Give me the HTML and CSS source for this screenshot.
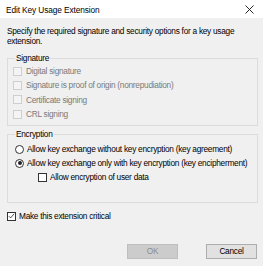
FILE: index.html
```html
<!DOCTYPE html>
<html>
<head>
<meta charset="utf-8">
<link rel="stylesheet" href="styles.css">
</head>
<body>
<div class="dialog">
  <div class="titlebar">
    <span class="title">Edit Key Usage Extension</span>
    <svg class="close" width="9" height="9" viewBox="0 0 9 9"><path d="M0.5 0.5 L8.5 8.5 M8.5 0.5 L0.5 8.5" stroke="#111" stroke-width="0.9" fill="none"/></svg>
  </div>
  <div class="content">
    <p class="desc">Specify the required signature and security options for a key usage extension.</p>
    <fieldset class="group">
      <legend>Signature</legend>
      <div class="row disabled"><span class="cb"></span><span>Digital signature</span></div>
      <div class="row disabled"><span class="cb"></span><span>Signature is proof of origin (nonrepudiation)</span></div>
      <div class="row disabled"><span class="cb"></span><span>Certificate signing</span></div>
      <div class="row disabled"><span class="cb"></span><span>CRL signing</span></div>
    </fieldset>
    <fieldset class="group enc">
      <legend>Encryption</legend>
      <div class="row rrow"><span class="radio"></span><span>Allow key exchange without key encryption (key agreement)</span></div>
      <div class="row rrow"><span class="radio on"></span><span>Allow key exchange only with key encryption (key encipherment)</span></div>
      <div class="row sub"><span class="cb en"></span><span>Allow encryption of user data</span></div>
    </fieldset>
    <div class="row crit"><span class="cb en checked"><svg width="8" height="8" viewBox="0 0 8 8"><path d="M1 4.2 L3 6.2 L7 1.5" stroke="#222" stroke-width="0.9" fill="none"/></svg></span><span>Make this extension critical</span></div>
    <div class="buttons">
      <span class="btn ok">OK</span>
      <span class="btn cancel">Cancel</span>
    </div>
  </div>
</div>
</body>
</html>
```
FILE: styles.css
```css
html, body {
  margin: 0;
  padding: 0;
  background: #f0f0f0;
}
body {
  width: 263px;
  height: 266px;
  overflow: hidden;
  font-family: "Liberation Sans", Arial, sans-serif;
  font-size: 8.3px;
  letter-spacing: -0.27px;
  color: #000;
}
.titlebar {
  height: 18px;
  background: #fff;
  display: flex;
  align-items: center;
  justify-content: space-between;
  padding: 0 9px 0 6px;
}
.title {
  font-size: 8.3px;
  letter-spacing: -0.1px;
  color: #000;
  padding-top: 1px;
}
.close {
  display: block;
}
.content {
  padding: 8px 5px 0 7px;
}
.desc {
  margin: 0;
  line-height: 10px;
  width: 228px;
}
.group {
  margin: 7px 0 0 0;
  padding: 1px 5px 4px 5px;
  border: 1px solid #dcdcdc;
  min-width: 0;
}
.group legend {
  padding: 0 1px;
  margin-left: 2px;
  line-height: 10px;
  height: 10px;
}
.row {
  display: flex;
  align-items: center;
  height: 14.3px;
  white-space: nowrap;
}
.disabled {
  color: #7a7a7a;
}
.cb {
  width: 7px;
  height: 7px;
  border: 1px solid #cfcfcf;
  background: #f4f4f4;
  margin-right: 4px;
  flex: none;
  display: flex;
  align-items: center;
  justify-content: center;
}
.cb.en {
  border-color: #333;
  background: #fff;
}
.cb svg {
  display: block;
}
.enc {
  margin-top: 3px;
  padding-top: 3px;
  padding-bottom: 18px;
}
.rrow, .sub {
  height: 14px;
}
.radio {
  width: 7px;
  height: 7px;
  border: 1px solid #333;
  border-radius: 50%;
  background: #fff;
  margin: 0 3px 0 2px;
  flex: none;
  display: flex;
  align-items: center;
  justify-content: center;
}
.radio.on::after {
  content: "";
  width: 4px;
  height: 4px;
  border-radius: 50%;
  background: #222;
}
.sub {
  padding-left: 25px;
}
.sub .cb {
  margin-right: 3px;
}
.crit {
  margin-top: 6px;
  height: 14px;
}
.crit .cb {
  margin-right: 3px;
}
.buttons {
  display: flex;
  justify-content: flex-end;
  gap: 28px;
  margin-top: 21px;
  padding-right: 1px;
}
.btn {
  width: 49px;
  height: 13px;
  line-height: 13px;
  text-align: center;
  border: 1px solid #adadad;
  background: #e1e1e1;
}
.btn.ok {
  background: #cccccc;
  border-color: #bfbfbf;
  color: #8c8c8c;
}
```
